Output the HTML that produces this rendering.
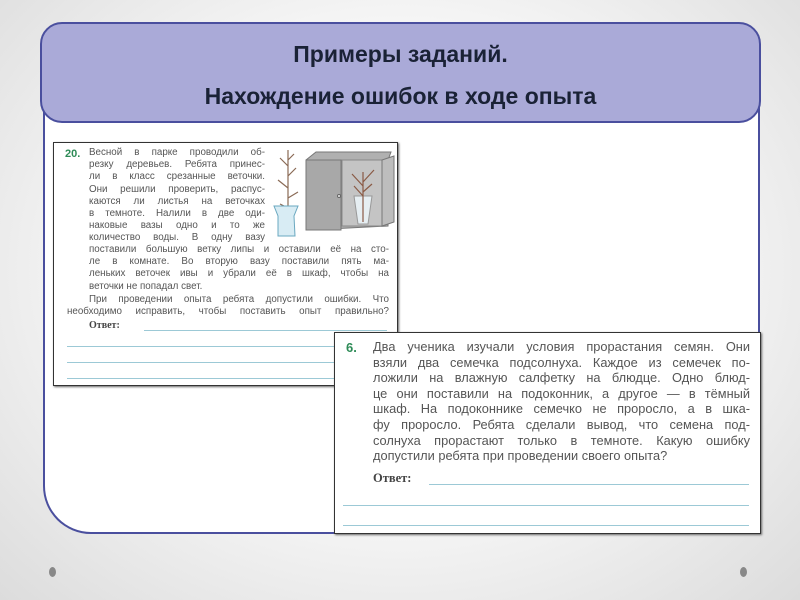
<!DOCTYPE html>
<html><head><meta charset="utf-8"><style>
*{margin:0;padding:0;box-sizing:border-box}
body{width:800px;height:600px;overflow:hidden;position:relative;background:radial-gradient(ellipse at 50% 45%,#fff 0%,#f7f7f7 50%,#dcdcdc 100%);font-family:"Liberation Sans",sans-serif}
.panel{position:absolute;left:43px;top:60px;width:717px;height:474px;border:2.5px solid #4a4f9e;border-top:none;border-radius:0 0 40px 48px;background:#fff}
.title{position:absolute;left:40px;top:22px;width:721px;height:101px;background:#aaaad8;border:2.5px solid #4a4f9e;border-radius:22px;text-align:center;color:#1a2236;font-weight:bold;font-size:23px;line-height:42px;padding-top:9px}
.box{position:absolute;background:#fff;border:1.5px solid #333;box-shadow:1px 1px 2px #666;color:#555}
.b1{left:53px;top:142px;width:345px;height:244px;font-size:9.8px;line-height:12.2px}
.b2{left:334px;top:332px;width:427px;height:202px;font-size:12.8px;line-height:15.6px}
.num{color:#2e8b57;font-weight:bold;position:absolute}
.t{position:absolute}
.t div{text-align:justify;text-align-last:justify;white-space:nowrap}
.t div.e{text-align-last:left}
.ln{position:absolute;height:1px;background:#9cc9d6}
.otv{position:absolute;font-family:"Liberation Serif",serif;font-weight:bold;color:#444}
.dot{position:absolute;width:7px;height:10px;border-radius:50%;background:#888}
</style></head><body>
<div class="panel"></div>
<div class="title">Примеры заданий.<br>Нахождение ошибок в ходе опыта</div>

<div class="box b1">
<div class="num" style="left:11px;top:5px;font-size:11px">20.</div>
<div class="t" style="left:35px;top:4px;width:176px"><div>Весной в парке проводили об-</div><div>резку деревьев. Ребята принес-</div><div>ли в класс срезанные веточки.</div><div>Они решили проверить, распус-</div><div>каются ли листья на веточках</div><div>в темноте. Налили в две оди-</div><div>наковые вазы одно и то же</div><div>количество воды. В одну вазу</div></div>
<div class="t" style="left:35px;top:101px;width:300px"><div>поставили большую ветку липы и оставили её на сто-</div><div>ле в комнате. Во вторую вазу поставили пять ма-</div><div>леньких веточек ивы и убрали её в шкаф, чтобы на</div><div class="e">веточки не попадал свет.</div></div>
<div class="t" style="left:13px;top:151px;width:322px"><div style="padding-left:22px">При проведении опыта ребята допустили ошибки. Что</div><div>необходимо исправить, чтобы поставить опыт правильно?</div></div>
<div class="otv" style="left:35px;top:177px;font-size:10px">Ответ:</div>
<div class="ln" style="left:90px;top:187px;width:243px"></div>
<div class="ln" style="left:13px;top:203px;width:320px"></div>
<div class="ln" style="left:13px;top:219px;width:320px"></div>
<div class="ln" style="left:13px;top:235px;width:320px"></div>
<svg style="position:absolute;left:212px;top:3px" width="130" height="95" viewBox="0 0 130 95">
<path d="M22 86 L22 4 M22 20 L14 12 M22 30 L30 22 M22 42 L12 34 M22 52 L32 46 M22 62 L14 58 M22 14 L28 8" stroke="#8a6a55" stroke-width="1.2" fill="none"/>
<path d="M8 60 L32 60 L28 70 L29 90 L12 90 L12 70 Z" fill="#d8ecf4" stroke="#6aa8c0"/>
<path d="M40 14 L50 6 L125 6 L122 14 L122 80 L44 84 L40 80 Z" fill="#b0b0b0" stroke="#777"/>
<rect x="40" y="14" width="35" height="70" fill="#a8a8a8" stroke="#777"/>
<rect x="76" y="14" width="40" height="66" fill="#c4c4c4" stroke="#888"/>
<path d="M116 14 L128 10 L128 76 L116 80 Z" fill="#bdbdbd" stroke="#777"/>
<circle cx="73" cy="50" r="1.5" fill="#eee" stroke="#666"/>
<path d="M88 50 L106 50 L102 78 L92 78 Z" fill="#e6eef2" stroke="#999"/>
<path d="M97 76 L97 26 M97 40 L86 28 M97 36 L108 24 M97 50 L88 40 M97 46 L106 38" stroke="#8a5a45" stroke-width="1.2" fill="none"/>
</svg>
</div>

<div class="box b2">
<div class="num" style="left:11px;top:7px;font-size:13px">6.</div>
<div class="t" style="left:38px;top:6px;width:377px"><div>Два ученика изучали условия прорастания семян. Они</div><div>взяли два семечка подсолнуха. Каждое из семечек по-</div><div>ложили на влажную салфетку на блюдце. Одно блюд-</div><div>це они поставили на подоконник, а другое — в тёмный</div><div>шкаф. На подоконнике семечко не проросло, а в шка-</div><div>фу проросло. Ребята сделали вывод, что семена под-</div><div>солнуха прорастают только в темноте. Какую ошибку</div><div class="e">допустили ребята при проведении своего опыта?</div></div>
<div class="otv" style="left:38px;top:138px;font-size:12.5px">Ответ:</div>
<div class="ln" style="left:94px;top:151px;width:320px"></div>
<div class="ln" style="left:8px;top:172px;width:406px"></div>
<div class="ln" style="left:8px;top:192px;width:406px"></div>
</div>

<div class="dot" style="left:49px;top:567px"></div>
<div class="dot" style="left:740px;top:567px"></div>
</body></html>
